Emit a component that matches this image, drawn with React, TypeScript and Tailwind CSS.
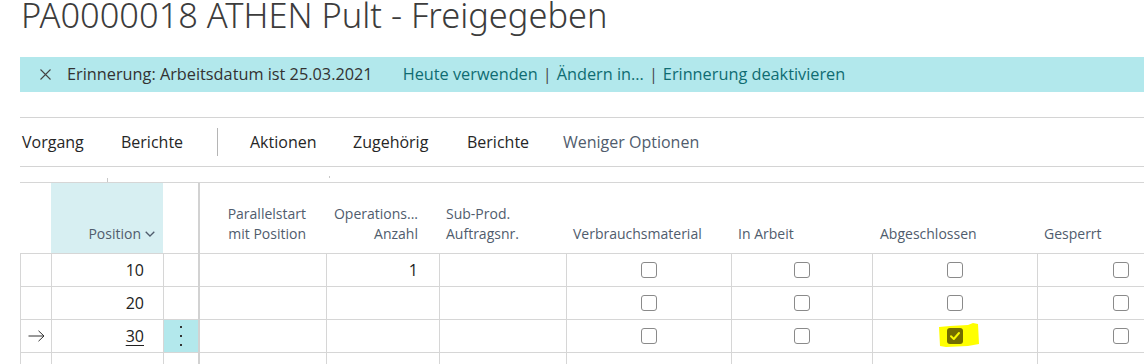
import React from "react";

const gridCols =
  "grid grid-cols-[31px_112px_35px_2px_126px_113px_127px_165px_141px_165px_166px]";

function Checkbox() {
  return (
    <div className="w-[16px] h-[16px] rounded-[3px] border border-[#8a8a8a] bg-white" />
  );
}

function CheckedHighlighted() {
  return (
    <div className="relative w-full h-full flex items-center justify-center">
      <svg
        className="absolute left-[65px] top-[3px]"
        width="41"
        height="25"
        viewBox="0 0 41 25"
      >
        <path
          d="M1 4 L12 3 L30 2 L35 0 L40 1 L41 21 L30 23 L8 24 L2 23 Z"
          fill="#ffff00"
        />
      </svg>
      <div className="relative w-[16px] h-[16px] rounded-[3px] bg-[#726c00] flex items-center justify-center">
        <svg width="12" height="12" viewBox="0 0 12 12">
          <path
            d="M2 6.3 L4.8 9 L10 3"
            fill="none"
            stroke="#f8f800"
            strokeWidth="2"
            strokeLinecap="round"
            strokeLinejoin="round"
          />
        </svg>
      </div>
    </div>
  );
}

type RowProps = {
  arrow?: boolean;
  pos?: string;
  active?: boolean;
  ops?: string;
  checks?: boolean;
  checked?: boolean;
};

function Row({ arrow, pos, active, ops, checks, checked }: RowProps) {
  const cell = "border-l border-[#d6d6d6] h-[32px]";
  return (
    <div className={`${gridCols} border-b border-[#d6d6d6] text-[16px] text-[#212121]`}>
      <div className={`${cell} flex items-center pl-[7px]`}>
        {arrow && (
          <svg width="17" height="12" viewBox="0 0 17 12">
            <path
              d="M0.5 6 H16 M10.5 0.8 L16 6 L10.5 11.2"
              fill="none"
              stroke="#333"
              strokeWidth="1"
            />
          </svg>
        )}
      </div>
      <div className={`${cell} flex items-center justify-end pr-[19px]`}>
        <span className={active ? "underline underline-offset-[3px]" : ""}>{pos}</span>
      </div>
      <div
        className={`${cell} flex flex-col items-center justify-center gap-[7px] ${
          active ? "bg-[#b3e8ec]" : ""
        }`}
      >
        {active && (
          <>
            <div className="w-[2px] h-[2px] bg-[#333]" />
            <div className="w-[2px] h-[2px] bg-[#333]" />
            <div className="w-[2px] h-[2px] bg-[#333]" />
          </>
        )}
      </div>
      <div className="bg-[#d2d2d2] h-[33px] -mb-px" />
      <div className="h-[32px]" />
      <div className={`${cell} flex items-center justify-end pr-[21px]`}>{ops}</div>
      <div className={cell} />
      <div className={`${cell} flex items-center justify-center`}>
        {checks && <Checkbox />}
      </div>
      <div className={`${cell} flex items-center justify-center`}>
        {checks && <Checkbox />}
      </div>
      <div className={`${cell} flex items-center justify-center`}>
        {checks && (checked ? <CheckedHighlighted /> : <Checkbox />)}
      </div>
      <div className={`${cell} flex items-center justify-center`}>
        {checks && <Checkbox />}
      </div>
    </div>
  );
}

export default function App() {
  const head =
    "h-[70px] flex flex-col justify-end pb-[9px] text-[14px] leading-[20px] text-[#505c6d]";
  return (
    <div className="w-[1144px] h-[364px] overflow-hidden bg-white font-['Segoe_UI','Open_Sans',sans-serif]">
      <h1 className="ml-[21px] font-['Noto_Sans','Open_Sans',sans-serif] text-[34.4px] font-light leading-[35px] -mt-[3px] text-[#3c3c3c] whitespace-nowrap">
        PA0000018 ATHEN Pult - Freigegeben
      </h1>

      <div className="ml-[20px] mt-[25px] h-[35px] bg-[#b2e8ec] flex items-center pl-[20px] text-[16.3px] whitespace-nowrap">
        <svg width="11" height="11" viewBox="0 0 11 11" className="mr-[16px]">
          <path d="M0.5 0.5 L10.5 10.5 M10.5 0.5 L0.5 10.5" stroke="#444" strokeWidth="1.1" />
        </svg>
        <span className="text-[#323232]">Erinnerung: Arbeitsdatum ist 25.03.2021</span>
        <span className="ml-[30px] text-[#0f6c72]">Heute verwenden</span>
        <span className="mx-[5px] text-[#4a4a4a]">|</span>
        <span className="text-[#0f6c72]">Ändern in...</span>
        <span className="mx-[5px] text-[#4a4a4a]">|</span>
        <span className="text-[#0f6c72]">Erinnerung deaktivieren</span>
      </div>

      <div className="ml-[20px] mt-[25px] border-t border-b border-[#d4d4d4] h-[50px] flex items-center text-[16px] text-[#262626] whitespace-nowrap">
        <div className="w-[101px] pl-[2px]">Vorgang</div>
        <div className="w-[96px]">Berichte</div>
        <div className="w-px h-[28px] bg-[#b5b5b5]" />
        <div className="w-[32px]" />
        <div className="w-[103px]">Aktionen</div>
        <div className="w-[114px]">Zugehörig</div>
        <div className="w-[96px]">Berichte</div>
        <div className="text-[#505c6d]">Weniger Optionen</div>
      </div>

      <div className="h-[15px] flex items-end">
        <div className="ml-[107px] w-px h-[4px] bg-[#c8c8c8]" />
        <div className="ml-[221px] mb-[4px] w-px h-[2px] bg-[#c8c8c8]" />
      </div>

      <div className="ml-[20px] border-t border-[#d6d6d6]">
        <div className={`${gridCols} border-b border-[#d6d6d6]`}>
          <div className="h-[70px]" />
          <div className={`${head} bg-[#d7eff2] items-end pr-[8px]`}>
            <div className="flex items-center gap-[4px]">
              <span>Position</span>
              <svg width="10" height="6" viewBox="0 0 10 6">
                <path d="M0.7 0.7 L5 5 L9.3 0.7" fill="none" stroke="#505c6d" strokeWidth="1.3" />
              </svg>
            </div>
          </div>
          <div className="h-[70px]" />
          <div className="bg-[#d2d2d2] h-[71px] -mb-px" />
          <div className={`${head} text-right pr-[20px]`}>
            <div>Parallelstart</div>
            <div>mit Position</div>
          </div>
          <div className={`${head} text-right pr-[21px]`}>
            <div>Operations...</div>
            <div>Anzahl</div>
          </div>
          <div className={`${head} pl-[7px]`}>
            <div>Sub-Prod.</div>
            <div>Auftragsnr.</div>
          </div>
          <div className={`${head} pl-[7px]`}>Verbrauchsmaterial</div>
          <div className={`${head} pl-[7px]`}>In Arbeit</div>
          <div className={`${head} pl-[8px]`}>Abgeschlossen</div>
          <div className={`${head} pl-[7px]`}>Gesperrt</div>
        </div>
        <Row pos="10" ops="1" checks />
        <Row pos="20" checks />
        <Row arrow pos="30" active checks checked />
        <Row />
      </div>
    </div>
  );
}
